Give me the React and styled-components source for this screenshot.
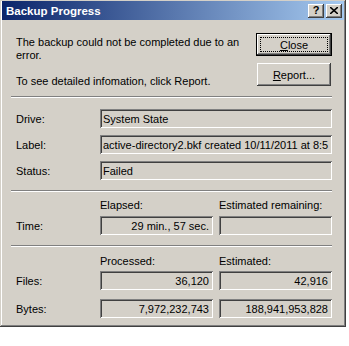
import styled, { createGlobalStyle } from "styled-components";

const GlobalStyle = createGlobalStyle`
  html, body {
    margin: 0;
    padding: 0;
    background: #ffffff;
  }
  body {
    font-family: "Liberation Sans", Arial, sans-serif;
    font-size: 11px;
    color: #000;
  }
`;

const raised = `
  box-shadow: inset -1px -1px #404040, inset 1px 1px #ffffff,
    inset -2px -2px #808080, inset 2px 2px #d4d0c8;
`;

const sunken = `
  box-shadow: inset 1px 1px #808080, inset -1px -1px #ffffff,
    inset 2px 2px #404040, inset -2px -2px #d4d0c8;
`;

const Window = styled.div`
  box-sizing: border-box;
  width: 346px;
  height: 327px;
  padding: 1px 2px 2px 2px;
  background: #d4d0c8;
  box-shadow: inset -1px -1px #404040, inset 1px 1px #d4d0c8,
    inset -2px -2px #808080, inset 2px 2px #ffffff;
  display: flex;
  flex-direction: column;
  overflow: hidden;
`;

const TitleBar = styled.div`
  flex: none;
  height: 19px;
  display: flex;
  align-items: center;
  padding: 0 2px 0 4px;
  background: linear-gradient(to right, #0a246a, #a6caf0);
`;

const Title = styled.span`
  flex: 1;
  color: #fff;
  font-weight: bold;
  font-size: 11.5px;
`;

const TitleButton = styled.div`
  width: 16px;
  height: 14px;
  margin-left: 2px;
  background: #d4d0c8;
  ${raised}
  display: flex;
  align-items: center;
  justify-content: center;
  font-weight: bold;
  font-size: 11px;
  line-height: 1;
`;

const Body = styled.div`
  padding: 0 12px 0 14px;
  display: flex;
  flex-direction: column;
`;

const TopRow = styled.div`
  display: flex;
  justify-content: space-between;
  align-items: flex-start;
  padding-top: 13px;
`;

const Message = styled.div`
  width: 230px;
  padding-top: 3px;
  line-height: 13px;
  p {
    margin: 0 0 13px 0;
  }
  p:last-child {
    margin-bottom: 0;
  }
`;

const Buttons = styled.div`
  display: flex;
  flex-direction: column;
  align-items: flex-end;
  gap: 7px;
`;

const Button = styled.div`
  position: relative;
  box-sizing: border-box;
  width: ${(p) => (p.isDefault ? "76px" : "74px")};
  height: 23px;
  margin-right: ${(p) => (p.isDefault ? "0" : "1px")};
  display: flex;
  align-items: center;
  justify-content: center;
  background: #d4d0c8;
  ${(p) =>
    p.isDefault
      ? `border: 1px solid #000;
  box-shadow: inset -1px -1px #404040, inset 1px 1px #ffffff,
    inset -2px -2px #808080;`
      : raised}
`;

const FocusRect = styled.span`
  position: absolute;
  inset: 3px;
  border: 1px dotted #000;
`;

const Separator = styled.div`
  height: 0;
  margin: ${(p) => p.mt || 0}px 0 0 -5px;
  border-top: 1px solid #808080;
  border-bottom: 1px solid #ffffff;
`;

const Grid = styled.div`
  display: grid;
  grid-template-columns: 78px 113px 113px;
  column-gap: 6px;
  row-gap: ${(p) => p.rowGap || 7}px;
  align-items: center;
  padding-top: ${(p) => p.pt || 0}px;
`;

const Label = styled.div`
  grid-column: 1;
  ${(p) => (p.row ? `grid-row: ${p.row};` : "")}
  margin-top: ${(p) => p.mt || 0}px;
`;

const Header = styled.div`
  line-height: 13px;
  grid-row: 1;
  grid-column: ${(p) => p.col};
`;

const Field = styled.div`
  box-sizing: border-box;
  height: 19px;
  ${sunken}
  padding: 0 4px 0 3px;
  margin-top: ${(p) => p.mt || 0}px;
  display: flex;
  align-items: center;
  justify-content: ${(p) => (p.right ? "flex-end" : "flex-start")};
  white-space: nowrap;
  overflow: hidden;
  grid-column: ${(p) => (p.wide ? "2 / span 2" : p.col || "auto")};
  ${(p) => (p.row ? `grid-row: ${p.row};` : "")}
`;

export default function App() {
  return (
    <>
      <GlobalStyle />
      <Window>
        <TitleBar>
          <Title>Backup Progress</Title>
          <TitleButton>?</TitleButton>
          <TitleButton>
            <svg width="8" height="7" viewBox="0 0 8 7">
              <path d="M0 0 L8 7 M8 0 L0 7" stroke="#000" strokeWidth="1.6" />
            </svg>
          </TitleButton>
        </TitleBar>
        <Body>
          <TopRow>
            <Message>
              <p>The backup could not be completed due to an error.</p>
              <p>To see detailed infomation, click Report.</p>
            </Message>
            <Buttons>
              <Button isDefault>
                <FocusRect />
                <span>
                  <u>C</u>lose
                </span>
              </Button>
              <Button>
                <span>
                  <u>R</u>eport...
                </span>
              </Button>
            </Buttons>
          </TopRow>
          <Separator mt={8} />
          <Grid pt={11}>
            <Label>Drive:</Label>
            <Field wide>System State</Field>
            <Label>Label:</Label>
            <Field wide>active-directory2.bkf created 10/11/2011 at 8:5</Field>
            <Label>Status:</Label>
            <Field wide>Failed</Field>
          </Grid>
          <Separator mt={10} />
          <Grid pt={7} rowGap={4}>
            <Header col={2}>Elapsed:</Header>
            <Header col={3}>Estimated remaining:</Header>
            <Label row={2}>Time:</Label>
            <Field right col={2} row={2}>
              29 min., 57 sec.
            </Field>
            <Field right col={3} row={2}></Field>
          </Grid>
          <Separator mt={10} />
          <Grid pt={8} rowGap={3}>
            <Header col={2}>Processed:</Header>
            <Header col={3}>Estimated:</Header>
            <Label row={2}>Files:</Label>
            <Field right col={2} row={2}>
              36,120
            </Field>
            <Field right col={3} row={2}>
              42,916
            </Field>
            <Label row={3} mt={6}>
              Bytes:
            </Label>
            <Field right col={2} row={3} mt={6}>
              7,972,232,743
            </Field>
            <Field right col={3} row={3} mt={6}>
              188,941,953,828
            </Field>
          </Grid>
        </Body>
      </Window>
    </>
  );
}
